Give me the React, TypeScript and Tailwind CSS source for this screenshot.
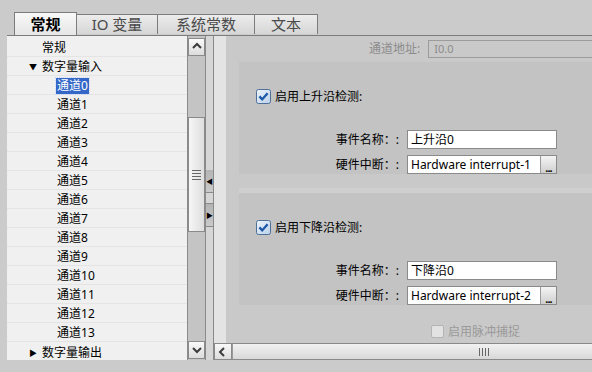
import React from 'react'

const channels = Array.from({ length: 14 }, (_, i) => i)

function Check({ id }: { id: string }) {
  return (
    <svg width="15" height="15" viewBox="0 0 15 15" className="shrink-0">
      <defs>
        <linearGradient id={id} x1="0" y1="0" x2="1" y2="1">
          <stop offset="0" stopColor="#eef4fb" />
          <stop offset="1" stopColor="#b9d0ea" />
        </linearGradient>
      </defs>
      <rect x="0.5" y="0.5" width="14" height="14" rx="2" fill={`url(#${id})`} stroke="#4d6f98" />
      <path d="M3.4 7.4 L6.2 10.4 L11.6 4.2" fill="none" stroke="#1c57a8" strokeWidth="2.3" />
    </svg>
  )
}

function Chevron({ dir }: { dir: 'up' | 'down' | 'left' }) {
  const d = dir === 'up' ? 'M2 7 L6 3 L10 7' : dir === 'down' ? 'M2 4 L6 8 L10 4' : 'M7 2 L3 6 L7 10'
  return (
    <svg width="12" height="12" viewBox="0 0 12 12">
      <path d={d} fill="none" stroke="#3c3c3c" strokeWidth="2" />
    </svg>
  )
}

function Field({ label, value, button }: { label: string; value: string; button?: boolean }) {
  return (
    <div className="flex items-center h-[19px]">
      <div className="w-[151px] shrink-0 text-right text-[12px] text-black pr-[8px]">{label}</div>
      <div className="w-[150px] shrink-0 h-[19px] bg-white border border-[#8a8a8a] flex items-center">
        <span className="flex-1 pl-[3px] text-[12px] leading-none text-black">{value}</span>
        {button && (
          <div className="w-[16px] h-[17px] border-l border-[#9a9a9a] bg-gradient-to-b from-[#f4f4f4] to-[#cfcfcf] flex items-end justify-center pb-[2px]">
            <span className="text-[11px] font-bold leading-[6px] tracking-[-1px] text-black">...</span>
          </div>
        )}
      </div>
    </div>
  )
}

function Group({ id, title, name, irq }: { id: string; title: string; name: string; irq: string }) {
  return (
    <div className="bg-[#c3c3c3] pl-[17px] pt-[27px]">
      <div className="flex items-center gap-[4px] h-[15px]">
        <Check id={id} />
        <span className="text-[12px] text-black">{title}</span>
      </div>
      <div className="mt-[26px] flex flex-col gap-[6px]">
        <Field label="事件名称：:" value={name} />
        <Field label="硬件中断：:" value={irq} button />
      </div>
    </div>
  )
}

export default function App() {
  return (
    <div className="w-[592px] h-[372px] bg-[#cbcbcb] overflow-hidden font-['Noto_Sans','Noto_Sans_CJK_SC',sans-serif]">
      {/* Tabs */}
      <div className="ml-[7px] pt-[13px] pl-[7px] flex items-end border-b border-[#7c7c7c] h-[36px]">
        <div className="w-[63px] h-[23px] border border-b-0 border-[#7c7c7c] bg-gradient-to-b from-[#f8f8f8] to-[#e6e6e6] flex items-center justify-center text-[15px] font-bold text-black">常规</div>
        <div className="w-[81px] h-[20px] border border-b-0 border-l-0 border-[#7c7c7c] bg-gradient-to-b from-[#ececec] to-[#d6d6d6] flex items-center justify-center text-[15px] text-[#4a4a4a] mb-[1px]">IO 变量</div>
        <div className="w-[97px] h-[20px] border border-b-0 border-l-0 border-[#7c7c7c] bg-gradient-to-b from-[#ececec] to-[#d6d6d6] flex items-center justify-center text-[15px] text-[#4a4a4a] mb-[1px]">系统常数</div>
        <div className="w-[63px] h-[20px] border border-b-0 border-l-0 border-[#7c7c7c] bg-gradient-to-b from-[#ececec] to-[#d6d6d6] flex items-center justify-center text-[15px] text-[#4a4a4a] mb-[1px]">文本</div>
      </div>

      {/* Body */}
      <div className="ml-[7px] flex h-[324px]">
        {/* Tree */}
        <div className="w-[180px] shrink-0 bg-[#f0f0f0] pt-[2px] overflow-hidden">
          <div className="h-[19px] border-b border-[#e4e4e4] pl-[35px] pt-[2px] flex items-center text-[12px] text-black">常规</div>
          <div className="h-[19px] border-b border-[#e4e4e4] pl-[22px] pt-[2px] flex items-center text-[12px] text-black">
            <span className="text-[8px] mr-[5px]">▼</span>数字量输入
          </div>
          {channels.map((c) => (
            <div key={c} className="h-[19px] border-b border-[#e4e4e4] pl-[49px] pt-[2px] flex items-center text-[12px] text-black">
              {c === 0 ? (
                <span className="bg-[#3468c8] text-white px-[1px] outline-1 outline-dotted outline-[#c8d8f8] leading-[16px]">通道0</span>
              ) : (
                <span className="px-[1px]">通道{c}</span>
              )}
            </div>
          ))}
          <div className="h-[19px] pl-[22px] pt-[2px] flex items-center text-[12px] text-black">
            <span className="text-[8px] mr-[5px]">▶</span>数字量输出
          </div>
        </div>

        {/* Vertical scrollbar */}
        <div className="w-[19px] shrink-0 border-x border-[#8a8a8a] bg-[#c4c4c4] flex flex-col pt-[2px] pb-[1px]">
          <div className="h-[18px] border border-[#8a8a8a] bg-gradient-to-b from-[#fafafa] to-[#dcdcdc] flex items-center justify-center">
            <Chevron dir="up" />
          </div>
          <div className="mt-[61px] h-[115px] border border-[#8a8a8a] bg-gradient-to-r from-[#f6f6f6] to-[#dedede] flex items-center justify-center">
            <div className="flex flex-col gap-[2px]">
              <div className="w-[9px] h-px bg-[#666]" />
              <div className="w-[9px] h-px bg-[#666]" />
              <div className="w-[9px] h-px bg-[#666]" />
              <div className="w-[9px] h-px bg-[#666]" />
            </div>
          </div>
          <div className="mt-auto h-[18px] border border-[#8a8a8a] bg-gradient-to-b from-[#fafafa] to-[#dcdcdc] flex items-center justify-center">
            <Chevron dir="down" />
          </div>
        </div>

        {/* Splitter */}
        <div className="w-[8px] shrink-0 bg-[#d6d6d6] border-r border-[#8a8a8a] flex flex-col pt-[134px]">
          <div className="h-[23px] bg-gradient-to-b from-[#b4b4b4] to-[#cacaca] border-b border-[#8a8a8a] flex items-center justify-center text-[7px] leading-none text-black">◀</div>
          <div className="mt-[10px] h-[24px] bg-gradient-to-b from-[#b4b4b4] to-[#cacaca] border-y border-[#8a8a8a] flex items-center justify-center text-[7px] leading-none text-black">▶</div>
        </div>

        {/* Right panel */}
        <div className="flex-1 min-w-0 flex flex-col">
          <div className="flex h-[307px]">
            <div className="w-[12px] shrink-0 bg-[#e4e4e4]" />
            <div className="flex-1 min-w-0 bg-[#c9c9c9] flex flex-col overflow-hidden">
              <div className="h-[26px] flex items-center pl-[143px] whitespace-nowrap">
                <span className="text-[12px] text-[#8c8c8c]">通道地址:</span>
                <div className="ml-[8px] w-[170px] shrink-0 h-[18px] border border-[#9c9c9c] flex items-center pl-[5px] text-[11px] text-[#8c8c8c]">I0.0</div>
              </div>
              <div className="ml-[13px] flex flex-col">
                <div className="h-[126px]">
                  <Group id="cb1" title="启用上升沿检测:" name="上升沿0" irq="Hardware interrupt-1" />
                </div>
                <div className="h-[5px] bg-[#cfcfcf]" />
                <div className="h-[127px]">
                  <Group id="cb2" title="启用下降沿检测:" name="下降沿0" irq="Hardware interrupt-2" />
                </div>
              </div>
              <div className="flex items-center gap-[4px] pl-[205px] h-[23px]">
                <div className="w-[13px] h-[13px] rounded-[2px] border border-[#b4b4b4] bg-[#e2e2e2]" />
                <span className="text-[12px] text-[#9a9a9a]">启用脉冲捕捉</span>
              </div>
            </div>
          </div>

          {/* Horizontal scrollbar */}
          <div className="h-[17px] flex border-y border-[#8a8a8a] bg-gradient-to-b from-[#f2f2f2] to-[#d8d8d8]">
            <div className="w-[18px] shrink-0 border-x border-[#8a8a8a] bg-gradient-to-b from-[#fafafa] to-[#dcdcdc] flex items-center justify-center">
              <Chevron dir="left" />
            </div>
            <div className="flex-1 flex items-center pl-[246px] border-l border-[#9a9a9a]">
              <div className="flex gap-[2px]">
                <div className="w-px h-[8px] bg-[#666]" />
                <div className="w-px h-[8px] bg-[#666]" />
                <div className="w-px h-[8px] bg-[#666]" />
                <div className="w-px h-[8px] bg-[#666]" />
              </div>
            </div>
          </div>
        </div>
      </div>
    </div>
  )
}
